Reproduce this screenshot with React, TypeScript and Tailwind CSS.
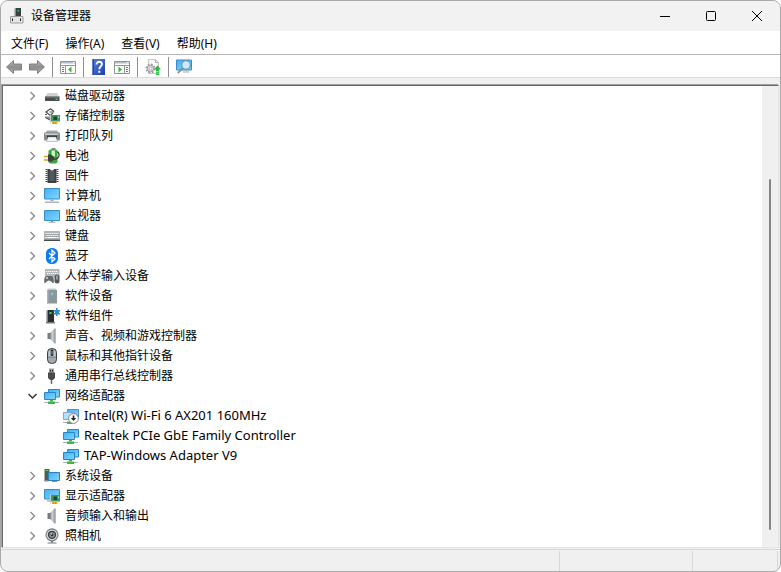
import { useState } from 'react';
import type { ReactNode } from 'react';

type Device = {
    name: string;
    icon: ReactNode;
    children?: Device[];
};

type IconProps = { children: ReactNode };

function Icon({ children }: IconProps) {
    return (
        <svg viewBox="0 0 16 16" className="h-4 w-4 shrink-0" aria-hidden="true">
            {children}
        </svg>
    );
}

// Shared gradients, referenced by id from the icons
function Gradients() {
    return (
        <svg className="absolute h-0 w-0" aria-hidden="true">
            <defs>
                <linearGradient id="screen" x1="0" y1="0" x2="1" y2="1">
                    <stop offset="0" stopColor="#3fb0f5" />
                    <stop offset="1" stopColor="#86d6ff" />
                </linearGradient>
                <linearGradient id="metal" x1="0" y1="0" x2="1" y2="0">
                    <stop offset="0" stopColor="#7b8084" />
                    <stop offset="0.5" stopColor="#d3d6d8" />
                    <stop offset="1" stopColor="#9a9ea2" />
                </linearGradient>
                <linearGradient id="arrow" x1="0" y1="0" x2="0" y2="1">
                    <stop offset="0" stopColor="#c0c0c0" />
                    <stop offset="0.5" stopColor="#8c8c8c" />
                    <stop offset="1" stopColor="#b4b4b4" />
                </linearGradient>
                <linearGradient id="help" x1="0" y1="0" x2="1" y2="1">
                    <stop offset="0" stopColor="#5a7fe0" />
                    <stop offset="1" stopColor="#1b3fae" />
                </linearGradient>
            </defs>
        </svg>
    );
}

function Card() {
    return (
        <>
            <path d="M6 7h10v6.500H6z" fill="#3f9668" />
            <path d="M6 6.500h1v9H6z" fill="#c3ccc6" />
            <path d="M9.500 8.500h3.500v3.500H9.500z" fill="#1c4a30" />
            <path d="M14 8.500h1v1.500h-1z" fill="#b8ecc6" />
            <path d="M8 13.500h5.500V16H8z" fill="#f2ab22" />
            <path d="M9.500 14v2M11.500 14v2" stroke="#c27d0c" strokeWidth="0.500" />
        </>
    );
}

function Speaker() {
    return (
        <Icon>
            <path d="M3 5h3v6H3z" fill="#777b7f" />
            <path d="M6 5 10.500.5v15L6 11z" fill="url(#metal)" />
            <path d="M11 .5v15" stroke="#85898d" strokeWidth="1.200" />
            <path d="M3 5h1v6H3z" fill="#b9bdc0" />
        </Icon>
    );
}

function Network() {
    return (
        <Icon>
            <path d="M4.500 1.500h11V9h-11z" fill="url(#screen)" stroke="#2a86c2" />
            <path d="M.5 4.500h11v7H.5z" fill="url(#screen)" stroke="#2a86c2" />
            <path d="M6 12h3v1.500H6z" fill="#45b552" />
            <path d="M0 14h15v1H0z" fill="#aab1b4" />
            <path d="M4 13.500h7V16H4z" fill="#3db74a" />
        </Icon>
    );
}

function WifiAdapter() {
    return (
        <Icon>
            <path d="M4.500 1.500h11V9h-11z" fill="url(#screen)" stroke="#4b94c4" />
            <path d="M.5 4.500h11v7H.5z" fill="#b5e0fa" stroke="#7fa9c4" />
            <path d="M0 14h6v1H0z" fill="#a9b0b3" />
            <path d="M4 13.500h5V16H4z" fill="#4ab856" />
            <circle cx="10.500" cy="10.500" r="4.900" fill="#fff" stroke="#777" strokeWidth="0.900" />
            <path d="M10.500 7.500v4" stroke="#222" strokeWidth="1.600" />
            <path d="M7.800 10h5.400l-2.700 3z" fill="#222" />
        </Icon>
    );
}

const networkAdapters: Device[] = [
    { name: 'Intel(R) Wi-Fi 6 AX201 160MHz', icon: <WifiAdapter /> },
    { name: 'Realtek PCIe GbE Family Controller', icon: <Network /> },
    { name: 'TAP-Windows Adapter V9', icon: <Network /> },
];

const devices: Device[] = [
    {
        name: '磁盘驱动器',
        icon: (
            <Icon>
                <path d="M3.500 5h9.500l2 4H1z" fill="#cfd1d2" />
                <path d="M1 8.500h14.500V13H1z" fill="#4a4d4f" />
                <path d="M1 8.500h14.500v1H1z" fill="#85888a" />
                <path d="M11.500 10.500h2V12h-2z" fill="#2ee04a" />
            </Icon>
        ),
        children: [],
    },
    {
        name: '存储控制器',
        icon: (
            <Icon>
                <path d="M10 3.500 6.500.8 2 4l4 3.200L9 5" fill="#fff" stroke="#4e5254" strokeWidth="1.300" />
                <path d="M5.500 4H10M1 6.500h2" stroke="#4e5254" />
                <path d="M.5 8.500H6V12L2.500 10.500z" fill="#8b9092" />
                <path d="M1 9.500 6 12" stroke="#4e5254" />
                <Card />
            </Icon>
        ),
        children: [],
    },
    {
        name: '打印队列',
        icon: (
            <Icon>
                <path d="M3 2.500h10l2 3H1z" fill="#a4a9ac" />
                <rect x="0" y="4.500" width="16" height="8" rx="1" fill="#85898c" />
                <path d="M1 5.500h14v1.500H1z" fill="#d0d3d5" />
                <path d="M3 7.500h10v3.500H3z" fill="#2c2f31" />
                <path d="M4 9h8l1.500 4.500h-11z" fill="#f4f8fb" stroke="#8f9497" strokeWidth="0.500" />
                <path d="M13 5.500h2v1h-2z" fill="#35d048" />
            </Icon>
        ),
        children: [],
    },
    {
        name: '电池',
        icon: (
            <Icon>
                <path d="M7.500 0h4v2h-4z" fill="#8a8a8a" />
                <rect x="4.500" y="1.500" width="9" height="14" rx="2" fill="#37a63c" />
                <path d="M7.500 2.500h3.500v6H7.500z" fill="#c6f5bd" />
                <path d="M13.500 3.500c3 3 1.500 8.500-4 7.500" fill="none" stroke="#333" strokeWidth="1.200" />
                <path d="M4 6.500h3l3 2.500v2.500L8 13.500H4z" fill="#3f3f3f" />
                <path d="M0 8.500h4M0 12h4" stroke="#dd9f25" strokeWidth="1.400" />
            </Icon>
        ),
        children: [],
    },
    {
        name: '固件',
        icon: (
            <Icon>
                <path d="M3.500 1h9v14h-9z" fill="#3e4144" />
                <path d="M5.500 3h5v10h-5z" fill="#54585b" />
                <path d="M2.500 1v14M13.500 1v14" stroke="#3d3d3d" strokeWidth="2" strokeDasharray="1 1" />
                <path d="M6 1a2 1.500 0 0 0 4 0z" fill="#f0f0f0" />
            </Icon>
        ),
        children: [],
    },
    {
        name: '计算机',
        icon: (
            <Icon>
                <path d="M.5.5h15v10.500H.5z" fill="url(#screen)" stroke="#3a8cc4" />
                <path d="M6.500 11.500h3V13h-3z" fill="#a0a6a9" />
                <path d="M1 13.500h14V15H1z" fill="#a8b5be" />
            </Icon>
        ),
        children: [],
    },
    {
        name: '监视器',
        icon: (
            <Icon>
                <path d="M.5 2.500h15v10H.5z" fill="url(#screen)" stroke="#3a8cc4" />
                <path d="M7 13h2v1H7z" fill="#8d9396" />
                <path d="M4.500 13.800h7v1h-7z" fill="#a0a6a9" />
            </Icon>
        ),
        children: [],
    },
    {
        name: '键盘',
        icon: (
            <Icon>
                <path d="M0 3h16v8.500H0z" fill="#b0b5b9" />
                <path d="M0 11.500h16V13H0z" fill="#45494c" />
                <path d="M1.500 5.500h13M2.500 7.500h12" stroke="#fff" strokeWidth="1.200" strokeDasharray="1.300 .7" />
                <path d="M1.500 9.500h13" stroke="#fff" strokeWidth="1.200" strokeDasharray="1.500 .5 7 .5" />
                <path d="M1 6.500h14M1 8.500h14" stroke="#8a8f93" strokeWidth="0.500" />
            </Icon>
        ),
        children: [],
    },
    {
        name: '蓝牙',
        icon: (
            <Icon>
                <rect x="2" y="0" width="12" height="16" rx="5.500" fill="#0a7cf0" />
                <path d="m5 5 6 6-3 2.800V2.200L11 5l-6 6" fill="none" stroke="#fff" strokeWidth="1.300" />
            </Icon>
        ),
        children: [],
    },
    {
        name: '人体学输入设备',
        icon: (
            <Icon>
                <path d="M1 1h14.500v8.500H1z" fill="#b4b9bc" />
                <path d="M2 3.500h12M3 5.500h11" stroke="#fff" strokeWidth="1.200" strokeDasharray="1.300 .7" />
                <path d="M.5 15C-.3 12.500.5 8 2.500 8h5c2 0 3 4.500 2 7-1 1-2-2.500-4.500-2.500S1.500 16 .5 15z" fill="#62686c" />
                <path d="M3 9v2M2 10h2" stroke="#eee" strokeWidth="0.800" />
                <rect x="10.500" y="6.500" width="5" height="9" rx="2.500" fill="#54595d" />
                <path d="M13 7.500v4" stroke="#dce0e2" />
            </Icon>
        ),
        children: [],
    },
    {
        name: '软件设备',
        icon: (
            <Icon>
                <path d="M4 .5h7.500l1.500 2H3z" fill="#c2c7ca" />
                <path d="M3 2h10v13.500H3z" fill="#8f969a" />
                <path d="M3 2h1.500v13.500H3z" fill="#aeb4b8" />
                <circle cx="8" cy="6" r="1.300" fill="#58d9ee" />
            </Icon>
        ),
        children: [],
    },
    {
        name: '软件组件',
        icon: (
            <Icon>
                <path d="M3.500 2H10v12H3.500z" fill="#2b2e30" />
                <path d="M2.500 2.500h1V14h-1z" fill="#707477" />
                <path d="M5.500 4h2v2h-2z" fill="#3be253" />
                <path d="M2 14h9v1.500H2z" fill="#777b7e" />
                <path d="M12 0h1.500v2H16v1.500h-1V5h1v1.500h-2.500V8H12V6.500H9.500V5H11V3.500H9.500V2H12z" fill="#2f8dcc" />
            </Icon>
        ),
        children: [],
    },
    { name: '声音、视频和游戏控制器', icon: <Speaker />, children: [] },
    {
        name: '鼠标和其他指针设备',
        icon: (
            <Icon>
                <rect x="3.500" y="0.500" width="9" height="15" rx="4" fill="#a3a9ae" stroke="#3c4043" />
                <path d="M5.200 3v5M10.800 3v5" stroke="#d3d8db" />
                <rect x="6.800" y="1.500" width="2.400" height="6.500" rx="1" fill="#26292b" />
                <path d="M8 3v3.500" stroke="#9ed0ef" strokeWidth="0.800" />
                <path d="M4 9.500h8" stroke="#7c8286" strokeWidth="0.700" />
            </Icon>
        ),
        children: [],
    },
    {
        name: '通用串行总线控制器',
        icon: (
            <Icon>
                <path d="M5 .5h5V5H5z" fill="#9b9fa2" />
                <path d="M6 2h1v1.500H6zM8 2h1v1.500H8z" fill="#222" />
                <path d="M4 4.500h7V10l-2 2H6l-2-2z" fill="#4a4c4e" />
                <path d="M7.500 12v4" stroke="#6a6d6f" strokeWidth="1.500" />
            </Icon>
        ),
        children: [],
    },
    { name: '网络适配器', icon: <Network />, children: networkAdapters },
    {
        name: '系统设备',
        icon: (
            <Icon>
                <path d="M.5 1h5v12h-5z" fill="#55595c" />
                <path d="M1.500 2.500h3" stroke="#45df5a" />
                <path d="M.5 12h4v1.500h-4z" fill="#888" />
                <path d="M4.500 4.500h11v8h-11z" fill="url(#screen)" stroke="#2f7fb5" />
                <path d="M8 13.500h5" stroke="#889" />
            </Icon>
        ),
        children: [],
    },
    {
        name: '显示适配器',
        icon: (
            <Icon>
                <path d="M.5 1.500h15v9.500H.5z" fill="url(#screen)" stroke="#3a8cc4" />
                <path d="M3 13h3" stroke="#8d9396" />
                <Card />
            </Icon>
        ),
        children: [],
    },
    { name: '音频输入和输出', icon: <Speaker />, children: [] },
    {
        name: '照相机',
        icon: (
            <Icon>
                <circle cx="8" cy="6.800" r="6" fill="#d5d7d8" stroke="#7b7f81" strokeWidth="1.200" />
                <circle cx="8" cy="6.800" r="3.500" fill="#8c9194" stroke="#3a3d3f" strokeWidth="1.300" />
                <circle cx="8" cy="6.800" r="1.400" fill="#2c2f31" />
                <circle cx="7.500" cy="6" r="0.700" fill="#e4e8ea" />
                <path d="M7 13h2v1.500H7z" fill="#777" />
                <path d="M3.500 14.500h9v1h-9z" fill="#777" />
            </Icon>
        ),
        children: [],
    },
];

function TitleIcon() {
    return (
        <Icon>
            <path d="M6.500 0H12v9H6.500z" fill="#3d4042" />
            <path d="M5.500.5h1.500V9H5.500z" fill="#8a8d8f" />
            <path d="M8.500 2H10v1.500H8.500z" fill="#2edd47" />
            <path d="M1.500 8.500h12.500v6.500H1.500z" fill="#e3e5e6" stroke="#9a9ea0" />
            <path d="M3 10.500h1v2.500H3zM11 10.500h1v2.500h-1z" fill="#222" />
        </Icon>
    );
}

function BackArrow() {
    return (
        <Icon>
            <path d="M.6 8 7.500 1.500V5H15.500v6H7.500v3.500z" fill="url(#arrow)" stroke="#747474" strokeWidth="0.900" />
        </Icon>
    );
}

function ForwardArrow() {
    return (
        <Icon>
            <path d="M15.400 8 8.500 1.500V5H.5v6h8v3.500z" fill="url(#arrow)" stroke="#747474" strokeWidth="0.900" />
        </Icon>
    );
}

function ConsoleTreeIcon() {
    return (
        <Icon>
            <path d="M.5 2.500h15v12H.5z" fill="#fff" stroke="#8d949c" />
            <path d="M1 3h14v1.500H1z" fill="#b5bcc4" />
            <path d="M1 6.500h14M5.500 6.500v8" stroke="#8d949c" />
            <path d="M2 8.500h2M2 10.500h2M2 12.500h2" stroke="#4a7dba" />
            <path d="M11.500 7.500v6l-3.500-3z" fill="#39b43a" />
            <path d="M13 3.500h1.500" stroke="#fff" />
        </Icon>
    );
}

function ActionPaneIcon() {
    return (
        <Icon>
            <path d="M.5 2.500h15v12H.5z" fill="#fff" stroke="#8d949c" />
            <path d="M1 3h14v1.500H1z" fill="#b5bcc4" />
            <path d="M1 6.500h14M10.500 6.500v8" stroke="#8d949c" />
            <path d="M12 8.500h2M12 10.500h2M12 12.500h2" stroke="#4a7dba" />
            <path d="M4.500 7.500v6l3.500-3z" fill="#39b43a" />
            <path d="M13 3.500h1.500" stroke="#fff" />
        </Icon>
    );
}

function HelpIcon() {
    return (
        <Icon>
            <path d="M1.500 0h12.500v16H1.500z" fill="url(#help)" />
            <path d="M1.500 0H3v16H1.500z" fill="#2448a8" />
            <path d="M5.500 5.500c0-3.800 5.500-3.500 5.500-.3 0 2-2.700 2.200-2.700 5" fill="none" stroke="#fff" strokeWidth="1.800" />
            <path d="M7.300 11.800h2v2h-2z" fill="#fff" />
        </Icon>
    );
}

function ScanIcon() {
    return (
        <Icon>
            <path d="M3.500.5h7l3 3v11h-10z" fill="#fafafa" stroke="#c5c5c5" />
            <path d="M10.500.5v3h3" fill="none" stroke="#b0b0b0" />
            <circle cx="5.500" cy="9.500" r="4" fill="none" stroke="#9a9a9a" strokeWidth="2" strokeDasharray="1.600 1.540" />
            <circle cx="5.500" cy="9.500" r="3.300" fill="#d4d4d4" stroke="#929292" strokeWidth="0.800" />
            <circle cx="5.500" cy="9.500" r="1.300" fill="#fff" stroke="#929292" strokeWidth="0.500" />
            <path d="m12.500 6.500 3.500 4h-2v5.500h-3v-5.500H9z" fill="#20bd35" />
            <path d="M11 12.500h3M11 14.200h3" stroke="#d0f5d4" strokeWidth="0.600" />
        </Icon>
    );
}

function MonitorSearchIcon() {
    return (
        <Icon>
            <path d="M.5 1h15v10H.5z" fill="url(#screen)" stroke="#3a8cc4" />
            <path d="M7 13h6" stroke="#a0a6a9" />
            <circle cx="10" cy="6" r="4.300" fill="#c8ecfd" stroke="#6b93ad" strokeWidth="1.200" />
            <path d="m6.800 9.200-5 5" stroke="#7d8e99" strokeWidth="1.800" />
        </Icon>
    );
}

const menus = ['文件(F)', '操作(A)', '查看(V)', '帮助(H)'];

function Separator() {
    return <span className="h-5 w-px bg-[#8f8f8f]" />;
}

function ToolButton({ label, children }: { label: string; children: ReactNode }) {
    return (
        <button type="button" aria-label={label}>
            {children}
        </button>
    );
}

function Row({ device }: { device: Device }) {
    return (
        <span className="flex items-center gap-[5px] whitespace-nowrap">
            {device.icon}
            {device.name}
        </span>
    );
}

function TreeNode({ device }: { device: Device }) {
    const [open, setOpen] = useState(device.name === '网络适配器');

    return (
        <li>
            <button
                type="button"
                aria-expanded={open}
                onClick={() => setOpen(!open)}
                className="flex h-5 items-center gap-1"
            >
                <svg viewBox="0 0 16 16" className="h-4 w-4" aria-hidden="true">
                    {open ? (
                        <path d="m4.500 6 4 4 4-4" fill="none" stroke="#333" strokeWidth="1.500" />
                    ) : (
                        <path d="m6.500 4 4 4-4 4" fill="none" stroke="#8c8c8c" strokeWidth="1.400" />
                    )}
                </svg>
                <Row device={device} />
            </button>
            {open && device.children && (
                <ul className="text-[13px]">
                    {device.children.map((child) => (
                        <li key={child.name} className="flex h-5 items-center pl-[39px]">
                            <Row device={child} />
                        </li>
                    ))}
                </ul>
            )}
        </li>
    );
}

export default function App() {
    return (
        <div className="flex min-h-screen flex-col overflow-hidden rounded-lg border border-[#a9a9a9] bg-[#f0f0f0] font-['Noto_Sans','Noto_Sans_CJK_SC',sans-serif] text-xs text-black">
            <Gradients />

            {/* Title bar */}
            <header className="flex h-[30px] items-center justify-between bg-[#f2f2f2] pl-2">
                <div className="flex items-center gap-[6px]">
                    <TitleIcon />
                    <h1>设备管理器</h1>
                </div>
                <div className="flex h-full">
                    <button type="button" aria-label="最小化" className="flex w-[46px] items-center justify-center">
                        <svg viewBox="0 0 10 10" className="h-[10px] w-[10px]">
                            <path d="M0 5.500h10" stroke="#000" />
                        </svg>
                    </button>
                    <button type="button" aria-label="最大化" className="flex w-[46px] items-center justify-center">
                        <svg viewBox="0 0 10 10" className="h-[10px] w-[10px]">
                            <rect x="0.500" y="0.500" width="9" height="9" rx="1" fill="none" stroke="#000" />
                        </svg>
                    </button>
                    <button type="button" aria-label="关闭" className="flex w-[46px] items-center justify-center">
                        <svg viewBox="0 0 10 10" className="h-[10px] w-[10px]">
                            <path d="m0 0 10 10M10 0 0 10" stroke="#000" />
                        </svg>
                    </button>
                </div>
            </header>

            {/* Menu */}
            <nav className="flex h-6 items-center gap-[17px] border-b border-[#b5b5b5] bg-white pt-0.5 pl-[10px]">
                {menus.map((menu) => (
                    <button key={menu} type="button">
                        {menu}
                    </button>
                ))}
            </nav>

            {/* Toolbar */}
            <div className="flex h-[23px] items-center gap-[7px] border-b border-[#dcdcdc] bg-white pt-0.5 pl-[5px]">
                <ToolButton label="后退">
                    <BackArrow />
                </ToolButton>
                <ToolButton label="前进">
                    <ForwardArrow />
                </ToolButton>
                <Separator />
                <ToolButton label="显示/隐藏控制台树">
                    <ConsoleTreeIcon />
                </ToolButton>
                <Separator />
                <ToolButton label="帮助">
                    <HelpIcon />
                </ToolButton>
                <ToolButton label="显示/隐藏操作窗格">
                    <ActionPaneIcon />
                </ToolButton>
                <Separator />
                <ToolButton label="更新驱动程序">
                    <ScanIcon />
                </ToolButton>
                <Separator />
                <ToolButton label="扫描检测硬件改动">
                    <MonitorSearchIcon />
                </ToolButton>
            </div>

            {/* Device tree */}
            <main className="mt-[7px] mr-px ml-px flex flex-1 border border-t-[#696969] border-r-[#e3e3e3] border-b-[#e3e3e3] border-l-[#696969] bg-white shadow-[-1px_-1px_0_#a0a0a0]">
                <ul className="flex-1 pl-[21px]">
                    {devices.map((device) => (
                        <TreeNode key={device.name} device={device} />
                    ))}
                </ul>
                <div className="flex w-4 justify-center bg-[#f0f0f0] pt-[93px] pb-[17px]">
                    <div className="w-[2px] rounded-full bg-[#858585]" />
                </div>
            </main>

            {/* Status bar */}
            <footer className="mt-px flex h-[22px] border-t border-[#d7d7d7] pt-px pr-0.5">
                <div className="flex-1 border-r border-[#d7d7d7]" />
                <div className="w-[133px] border-r border-[#d7d7d7]" />
                <div className="w-[85px] border-r border-[#d7d7d7]" />
            </footer>
        </div>
    );
}
